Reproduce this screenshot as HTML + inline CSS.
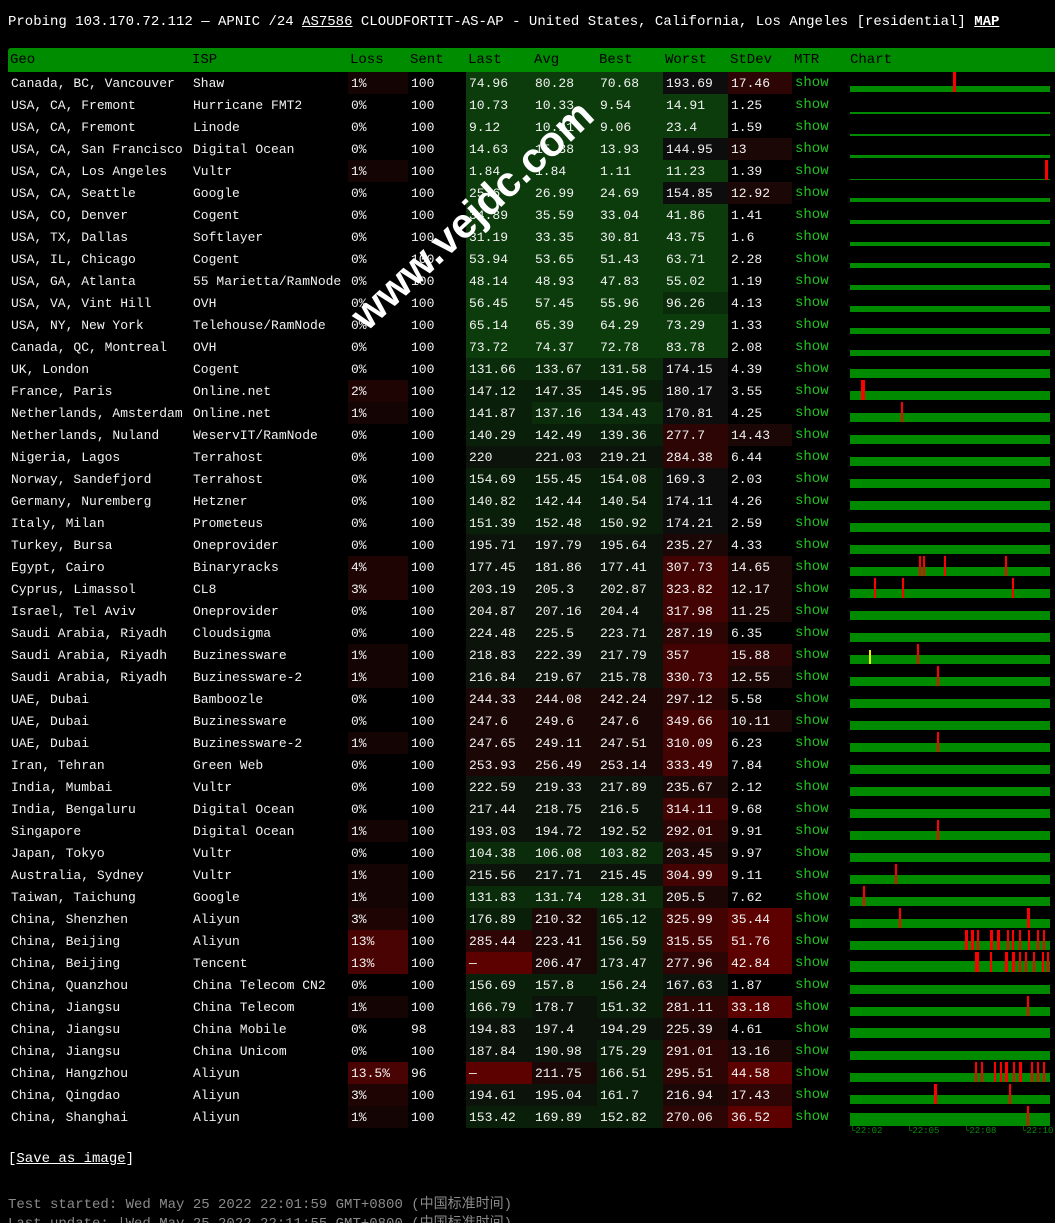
<!DOCTYPE html>
<html><head><meta charset="utf-8"><style>
html,body{margin:0;padding:0;background:#000;width:1055px;height:1223px;overflow:hidden}
body{font-family:"Liberation Mono","Noto Sans CJK SC",monospace;color:#eee;position:relative}
.hd{position:absolute;left:8px;top:14px;font-size:14px;white-space:pre;color:#fff}
.hd u{text-decoration:underline}
table{position:absolute;left:8px;top:48px;border-collapse:collapse;table-layout:fixed;font-size:13px;width:1047px}
th{background:#008c00;color:#000;font-weight:normal;text-align:left;height:24px;padding:0 0 0 2px;font-size:14px}
th:first-child{border-radius:3px 0 0 0}
td{height:22px;padding:0 0 0 3px;white-space:nowrap;overflow:hidden;color:#f2f2f2}
td:last-child{padding:0}
td.s{color:#22c322;font-size:14px}
.a{background:#0c3c0c}.b{background:#0a2c0a}.c{background:#0a1f0a}.d{background:#0b130b}
.e{background:#1c0707}.f{background:#2e0505}.g{background:#440303}.h{background:#5c0000}
.k{background:#0d0d0d}.l1{background:#140404}.l2{background:#1f0404}.l3{background:#4a0303}
.ch{position:relative;height:22px;width:207px}
.ch b{position:absolute;left:2px;width:200px;bottom:2px;background:#008a00;height:9px}
.ch i{position:absolute;bottom:2px;height:20px;width:3px;background:#f00;margin-left:-1px}
.ch i.y{background:#ee0}
.tl{position:absolute;top:1126px;font-size:9px;color:#0a8a0a}
.sv{position:absolute;left:8px;top:1151px;font-size:14px;color:#fff}
.sv u{text-decoration:underline}
.ts{position:absolute;left:8px;font-size:14px;color:#8a8a8a;white-space:pre}
.wm{position:absolute;left:472px;top:215px;font-family:"Liberation Sans",sans-serif;font-weight:bold;font-size:42px;color:#fff;transform:translate(-50%,-50%) rotate(-43deg);white-space:nowrap;line-height:1}
</style></head><body>
<div class="hd">Probing 103.170.72.112 — APNIC /24 <u>AS7586</u> CLOUDFORTIT-AS-AP - United States, California, Los Angeles [residential] <u><b>MAP</b></u></div>
<table>
<colgroup><col style="width:182px"><col style="width:158px"><col style="width:60px"><col style="width:58px"><col style="width:66px"><col style="width:65px"><col style="width:66px"><col style="width:65px"><col style="width:64px"><col style="width:56px"><col style="width:207px"></colgroup>
<tr><th>Geo</th><th>ISP</th><th>Loss</th><th>Sent</th><th>Last</th><th>Avg</th><th>Best</th><th>Worst</th><th>StDev</th><th>MTR</th><th>Chart</th></tr>
<tr><td>Canada, BC, Vancouver<td>Shaw<td class="l1">1%<td>100<td class="a">74.96<td class="a">80.28<td class="a">70.68<td class="k">193.69<td class="f">17.46<td class="s">show<td><div class="ch"><b style="height:6px"></b><i style="left:106px"></i></div>
<tr><td>USA, CA, Fremont<td>Hurricane FMT2<td>0%<td>100<td class="a">10.73<td class="a">10.33<td class="a">9.54<td class="a">14.91<td>1.25<td class="s">show<td><div class="ch"><b style="height:2px"></b></div>
<tr><td>USA, CA, Fremont<td>Linode<td>0%<td>100<td class="a">9.12<td class="a">10.11<td class="a">9.06<td class="a">23.4<td>1.59<td class="s">show<td><div class="ch"><b style="height:2px"></b></div>
<tr><td>USA, CA, San Francisco<td>Digital Ocean<td>0%<td>100<td class="a">14.63<td class="a">15.38<td class="a">13.93<td class="k">144.95<td class="e">13<td class="s">show<td><div class="ch"><b style="height:3px"></b></div>
<tr><td>USA, CA, Los Angeles<td>Vultr<td class="l1">1%<td>100<td class="a">1.84<td class="a">1.84<td class="a">1.11<td class="a">11.23<td>1.39<td class="s">show<td><div class="ch"><b style="height:1px"></b><i style="left:198px"></i></div>
<tr><td>USA, CA, Seattle<td>Google<td>0%<td>100<td class="a">25.6<td class="a">26.99<td class="a">24.69<td class="k">154.85<td class="e">12.92<td class="s">show<td><div class="ch"><b style="height:4px"></b></div>
<tr><td>USA, CO, Denver<td>Cogent<td>0%<td>100<td class="a">34.89<td class="a">35.59<td class="a">33.04<td class="a">41.86<td>1.41<td class="s">show<td><div class="ch"><b style="height:4px"></b></div>
<tr><td>USA, TX, Dallas<td>Softlayer<td>0%<td>100<td class="a">31.19<td class="a">33.35<td class="a">30.81<td class="a">43.75<td>1.6<td class="s">show<td><div class="ch"><b style="height:4px"></b></div>
<tr><td>USA, IL, Chicago<td>Cogent<td>0%<td>100<td class="a">53.94<td class="a">53.65<td class="a">51.43<td class="a">63.71<td>2.28<td class="s">show<td><div class="ch"><b style="height:5px"></b></div>
<tr><td>USA, GA, Atlanta<td>55 Marietta/RamNode<td>0%<td>100<td class="a">48.14<td class="a">48.93<td class="a">47.83<td class="a">55.02<td>1.19<td class="s">show<td><div class="ch"><b style="height:5px"></b></div>
<tr><td>USA, VA, Vint Hill<td>OVH<td>0%<td>100<td class="a">56.45<td class="a">57.45<td class="a">55.96<td class="b">96.26<td>4.13<td class="s">show<td><div class="ch"><b style="height:6px"></b></div>
<tr><td>USA, NY, New York<td>Telehouse/RamNode<td>0%<td>100<td class="a">65.14<td class="a">65.39<td class="a">64.29<td class="a">73.29<td>1.33<td class="s">show<td><div class="ch"><b style="height:6px"></b></div>
<tr><td>Canada, QC, Montreal<td>OVH<td>0%<td>100<td class="a">73.72<td class="a">74.37<td class="a">72.78<td class="a">83.78<td>2.08<td class="s">show<td><div class="ch"><b style="height:6px"></b></div>
<tr><td>UK, London<td>Cogent<td>0%<td>100<td class="b">131.66<td class="b">133.67<td class="b">131.58<td class="k">174.15<td>4.39<td class="s">show<td><div class="ch"><b></b></div>
<tr><td>France, Paris<td>Online.net<td class="l2">2%<td>100<td class="c">147.12<td class="c">147.35<td class="c">145.95<td class="k">180.17<td>3.55<td class="s">show<td><div class="ch"><b></b><i style="left:14px;width:4px"></i></div>
<tr><td>Netherlands, Amsterdam<td>Online.net<td class="l1">1%<td>100<td class="c">141.87<td class="b">137.16<td class="b">134.43<td class="k">170.81<td>4.25<td class="s">show<td><div class="ch"><b></b><i style="left:54px;width:2px"></i></div>
<tr><td>Netherlands, Nuland<td>WeservIT/RamNode<td>0%<td>100<td class="c">140.29<td class="c">142.49<td class="c">139.36<td class="f">277.7<td class="e">14.43<td class="s">show<td><div class="ch"><b></b></div>
<tr><td>Nigeria, Lagos<td>Terrahost<td>0%<td>100<td class="d">220<td class="d">221.03<td class="d">219.21<td class="f">284.38<td>6.44<td class="s">show<td><div class="ch"><b></b></div>
<tr><td>Norway, Sandefjord<td>Terrahost<td>0%<td>100<td class="c">154.69<td class="c">155.45<td class="c">154.08<td class="k">169.3<td>2.03<td class="s">show<td><div class="ch"><b></b></div>
<tr><td>Germany, Nuremberg<td>Hetzner<td>0%<td>100<td class="c">140.82<td class="c">142.44<td class="c">140.54<td class="k">174.11<td>4.26<td class="s">show<td><div class="ch"><b></b></div>
<tr><td>Italy, Milan<td>Prometeus<td>0%<td>100<td class="c">151.39<td class="c">152.48<td class="c">150.92<td class="k">174.21<td>2.59<td class="s">show<td><div class="ch"><b></b></div>
<tr><td>Turkey, Bursa<td>Oneprovider<td>0%<td>100<td class="d">195.71<td class="d">197.79<td class="d">195.64<td class="e">235.27<td>4.33<td class="s">show<td><div class="ch"><b></b></div>
<tr><td>Egypt, Cairo<td>Binaryracks<td class="l2">4%<td>100<td class="d">177.45<td class="d">181.86<td class="d">177.41<td class="g">307.73<td class="e">14.65<td class="s">show<td><div class="ch"><b></b><i style="left:72px;width:2px"></i><i style="left:76px;width:2px"></i><i style="left:97px;width:2px"></i><i style="left:158px;width:2px"></i></div>
<tr><td>Cyprus, Limassol<td>CL8<td class="l2">3%<td>100<td class="d">203.19<td class="d">205.3<td class="d">202.87<td class="g">323.82<td class="e">12.17<td class="s">show<td><div class="ch"><b></b><i style="left:27px;width:2px"></i><i style="left:55px;width:2px"></i><i style="left:165px;width:2px"></i></div>
<tr><td>Israel, Tel Aviv<td>Oneprovider<td>0%<td>100<td class="d">204.87<td class="d">207.16<td class="d">204.4<td class="g">317.98<td class="e">11.25<td class="s">show<td><div class="ch"><b></b></div>
<tr><td>Saudi Arabia, Riyadh<td>Cloudsigma<td>0%<td>100<td class="d">224.48<td class="d">225.5<td class="d">223.71<td class="f">287.19<td>6.35<td class="s">show<td><div class="ch"><b></b></div>
<tr><td>Saudi Arabia, Riyadh<td>Buzinessware<td class="l1">1%<td>100<td class="d">218.83<td class="d">222.39<td class="d">217.79<td class="g">357<td class="f">15.88<td class="s">show<td><div class="ch"><b></b><i class="y" style="left:22px;height:14px;width:2px"></i><i style="left:70px;width:2px"></i></div>
<tr><td>Saudi Arabia, Riyadh<td>Buzinessware-2<td class="l1">1%<td>100<td class="d">216.84<td class="d">219.67<td class="d">215.78<td class="g">330.73<td class="e">12.55<td class="s">show<td><div class="ch"><b></b><i style="left:90px;width:2px"></i></div>
<tr><td>UAE, Dubai<td>Bamboozle<td>0%<td>100<td class="e">244.33<td class="e">244.08<td class="e">242.24<td class="f">297.12<td>5.58<td class="s">show<td><div class="ch"><b></b></div>
<tr><td>UAE, Dubai<td>Buzinessware<td>0%<td>100<td class="e">247.6<td class="e">249.6<td class="e">247.6<td class="g">349.66<td class="e">10.11<td class="s">show<td><div class="ch"><b></b></div>
<tr><td>UAE, Dubai<td>Buzinessware-2<td class="l1">1%<td>100<td class="e">247.65<td class="e">249.11<td class="e">247.51<td class="g">310.09<td>6.23<td class="s">show<td><div class="ch"><b></b><i style="left:90px;width:2px"></i></div>
<tr><td>Iran, Tehran<td>Green Web<td>0%<td>100<td class="e">253.93<td class="e">256.49<td class="e">253.14<td class="g">333.49<td>7.84<td class="s">show<td><div class="ch"><b></b></div>
<tr><td>India, Mumbai<td>Vultr<td>0%<td>100<td class="d">222.59<td class="d">219.33<td class="d">217.89<td class="e">235.67<td>2.12<td class="s">show<td><div class="ch"><b></b></div>
<tr><td>India, Bengaluru<td>Digital Ocean<td>0%<td>100<td class="d">217.44<td class="d">218.75<td class="d">216.5<td class="g">314.11<td>9.68<td class="s">show<td><div class="ch"><b></b></div>
<tr><td>Singapore<td>Digital Ocean<td class="l1">1%<td>100<td class="d">193.03<td class="d">194.72<td class="d">192.52<td class="f">292.01<td>9.91<td class="s">show<td><div class="ch"><b></b><i style="left:90px;width:2px"></i></div>
<tr><td>Japan, Tokyo<td>Vultr<td>0%<td>100<td class="b">104.38<td class="b">106.08<td class="b">103.82<td class="e">203.45<td>9.97<td class="s">show<td><div class="ch"><b></b></div>
<tr><td>Australia, Sydney<td>Vultr<td class="l1">1%<td>100<td class="d">215.56<td class="d">217.71<td class="d">215.45<td class="g">304.99<td>9.11<td class="s">show<td><div class="ch"><b></b><i style="left:48px;width:2px"></i></div>
<tr><td>Taiwan, Taichung<td>Google<td class="l1">1%<td>100<td class="b">131.83<td class="b">131.74<td class="b">128.31<td class="e">205.5<td>7.62<td class="s">show<td><div class="ch"><b></b><i style="left:16px;width:2px"></i></div>
<tr><td>China, Shenzhen<td>Aliyun<td class="l2">3%<td>100<td class="c">176.89<td class="e">210.32<td class="c">165.12<td class="g">325.99<td class="h">35.44<td class="s">show<td><div class="ch"><b></b><i style="left:52px;width:2px"></i><i style="left:180px;width:3px"></i></div>
<tr><td>China, Beijing<td>Aliyun<td class="l3">13%<td>100<td class="f">285.44<td class="e">223.41<td class="c">156.59<td class="g">315.55<td class="h">51.76<td class="s">show<td><div class="ch"><b></b><i style="left:118px"></i><i style="left:124px"></i><i style="left:130px;width:2px"></i><i style="left:143px"></i><i style="left:150px"></i><i style="left:160px;width:2px"></i><i style="left:165px;width:2px"></i><i style="left:172px;width:2px"></i><i style="left:181px;width:2px"></i><i style="left:190px;width:2px"></i><i style="left:196px;width:2px"></i></div>
<tr><td>China, Beijing<td>Tencent<td class="l3">13%<td>100<td class="h">—<td class="e">206.47<td class="c">173.47<td class="f">277.96<td class="h">42.84<td class="s">show<td><div class="ch"><b style="height:11px"></b><i style="left:128px;width:4px"></i><i style="left:143px;width:2px"></i><i style="left:158px;width:3px"></i><i style="left:165px;width:3px"></i><i style="left:172px;width:2px"></i><i style="left:178px;width:2px"></i><i style="left:186px;width:2px"></i><i style="left:195px;width:2px"></i><i style="left:200px;width:2px"></i></div>
<tr><td>China, Quanzhou<td>China Telecom CN2<td>0%<td>100<td class="c">156.69<td class="c">157.8<td class="c">156.24<td class="d">167.63<td>1.87<td class="s">show<td><div class="ch"><b></b></div>
<tr><td>China, Jiangsu<td>China Telecom<td class="l1">1%<td>100<td class="c">166.79<td class="d">178.7<td class="c">151.32<td class="f">281.11<td class="h">33.18<td class="s">show<td><div class="ch"><b></b><i style="left:180px;width:2px"></i></div>
<tr><td>China, Jiangsu<td>China Mobile<td>0%<td>98<td class="d">194.83<td class="d">197.4<td class="d">194.29<td class="e">225.39<td>4.61<td class="s">show<td><div class="ch"><b style="height:10px"></b></div>
<tr><td>China, Jiangsu<td>China Unicom<td>0%<td>100<td class="d">187.84<td class="d">190.98<td class="c">175.29<td class="f">291.01<td class="e">13.16<td class="s">show<td><div class="ch"><b></b></div>
<tr><td>China, Hangzhou<td>Aliyun<td class="l3">13.5%<td>96<td class="h">—<td class="e">211.75<td class="c">166.51<td class="f">295.51<td class="h">44.58<td class="s">show<td><div class="ch"><b></b><i style="left:128px;width:2px"></i><i style="left:134px;width:2px"></i><i style="left:147px;width:2px"></i><i style="left:153px;width:2px"></i><i style="left:158px;width:3px"></i><i style="left:166px;width:2px"></i><i style="left:172px;width:3px"></i><i style="left:184px;width:2px"></i><i style="left:190px;width:2px"></i><i style="left:196px;width:2px"></i></div>
<tr><td>China, Qingdao<td>Aliyun<td class="l2">3%<td>100<td class="d">194.61<td class="d">195.04<td class="c">161.7<td class="e">216.94<td class="f">17.43<td class="s">show<td><div class="ch"><b></b><i style="left:87px;width:3px"></i><i style="left:162px;width:2px"></i></div>
<tr><td>China, Shanghai<td>Aliyun<td class="l1">1%<td>100<td class="c">153.42<td class="c">169.89<td class="c">152.82<td class="f">270.06<td class="h">36.52<td class="s">show<td><div class="ch"><b style="height:13px"></b><i style="left:180px;width:2px"></i></div>
</table>
<div class="tl" style="left:850px">└22:02</div>
<div class="tl" style="left:907px">└22:05</div>
<div class="tl" style="left:964px">└22:08</div>
<div class="tl" style="left:1021px">└22:10</div>
<div class="wm">www.vejdc.com</div>
<div class="sv">[<u>Save as image</u>]</div>
<div class="ts" style="top:1193px">Test started: Wed May 25 2022 22:01:59 GMT+0800 (中国标准时间)</div>
<div class="ts" style="top:1212px">Last update: |Wed May 25 2022 22:11:55 GMT+0800 (中国标准时间)</div>
</body></html>
